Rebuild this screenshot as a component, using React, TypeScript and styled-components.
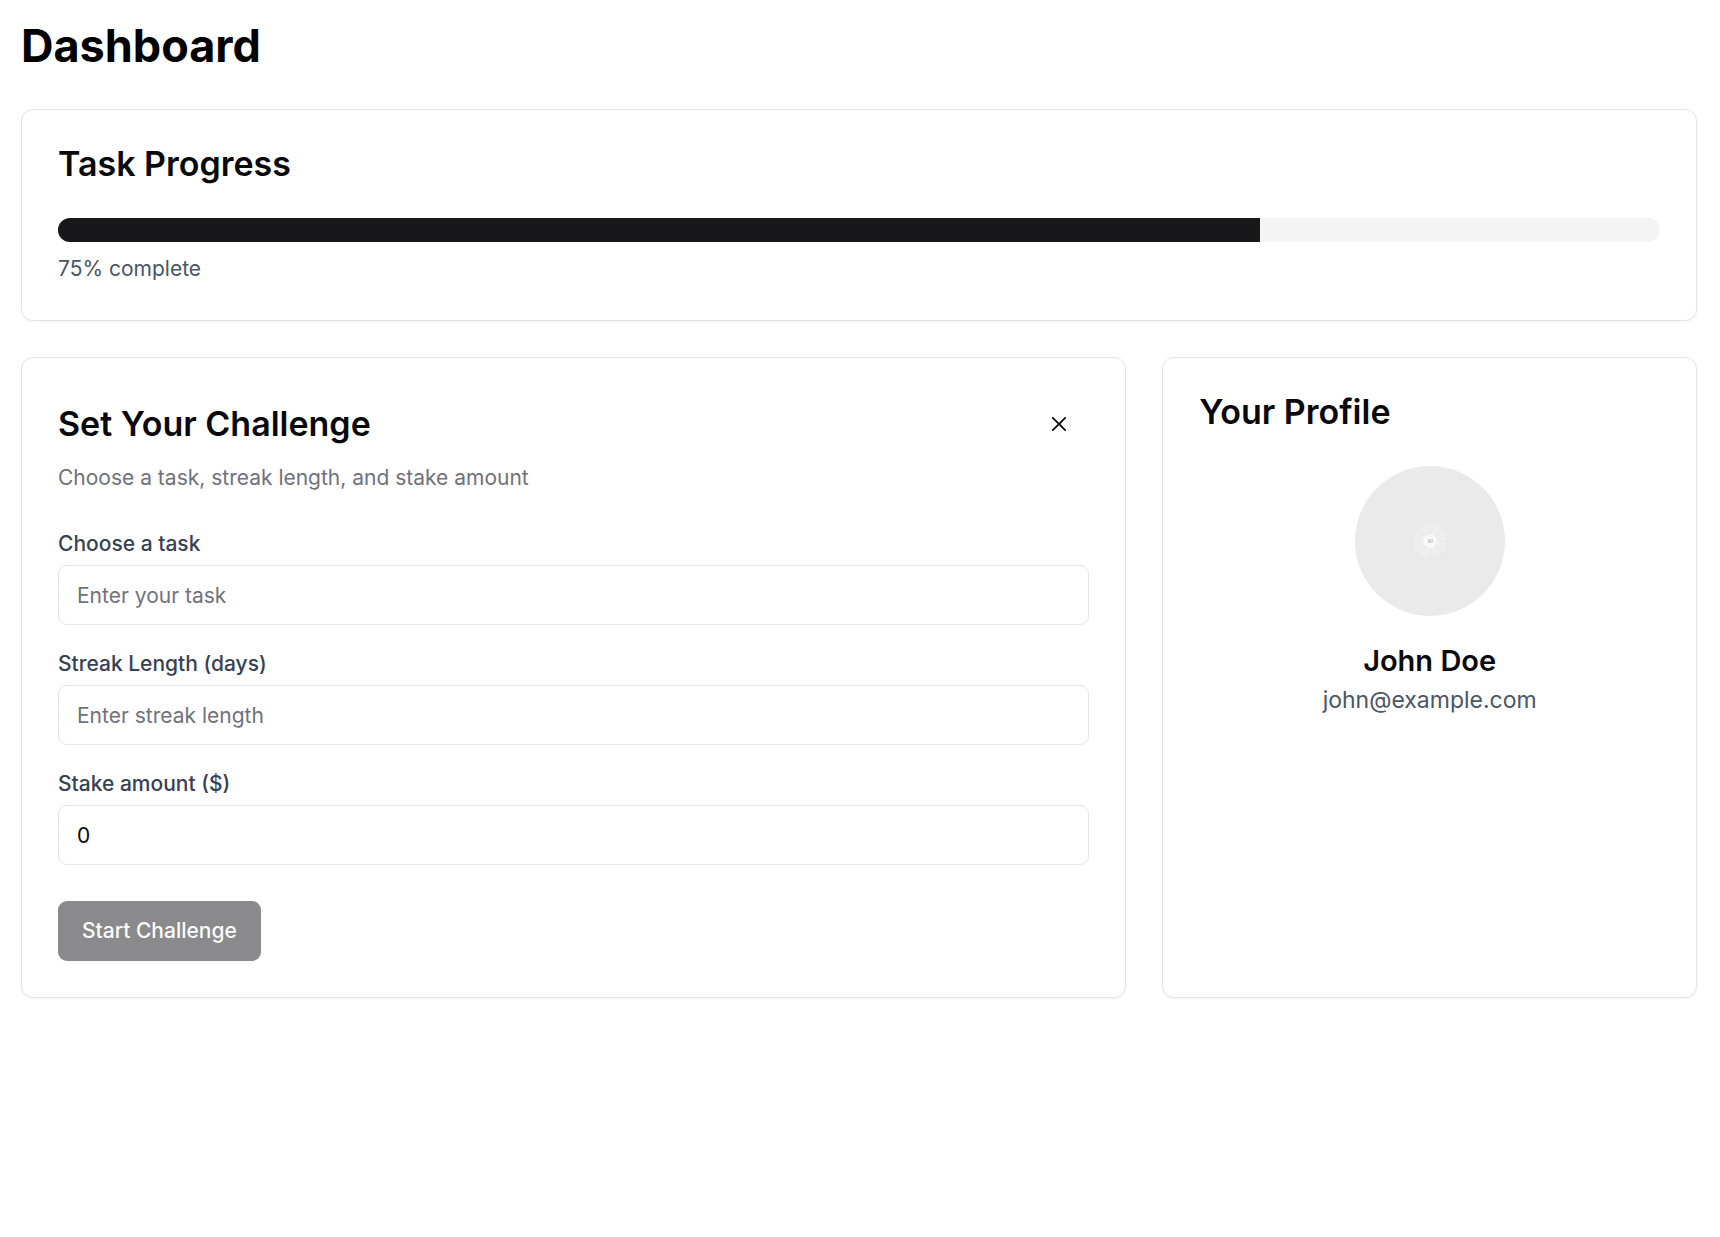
import React, { useState } from "react";
import styled, { createGlobalStyle } from "styled-components";

const GlobalStyle = createGlobalStyle`
  *, *::before, *::after { box-sizing: border-box; }
  body {
    margin: 0;
    background: #ffffff;
    color: #000000;
    font-family: Inter, "Liberation Sans", sans-serif;
    font-size: 24px;
    line-height: 36px;
    -webkit-font-smoothing: antialiased;
  }
  h1, h2, h3, p { margin: 0; }
  button, input { font: inherit; }
`;

const Page = styled.main`
  display: flex;
  flex-direction: column;
  gap: 36px;
  padding: 19px 23px 36px 21px;
`;

const PageTitle = styled.h1`
  font-size: 45px;
  font-weight: 700;
  line-height: 54px;
`;

const Card = styled.section`
  border: 1px solid #e4e4e7;
  border-radius: 12px;
  padding: 36px;
  background: #ffffff;
  color: #09090b;
  box-shadow: 0 1px 3px rgba(0, 0, 0, 0.05);
`;

const CardGrid = styled.div`
  display: grid;
  grid-template-columns: repeat(3, minmax(0, 1fr));
  gap: 36px;
`;

const ChallengeCard = styled(Card)`
  grid-column: span 2;
`;

const CardTitle = styled.h2`
  font-size: 34px;
  font-weight: 600;
  line-height: 36px;
`;

const ProgressTrack = styled.div`
  height: 24px;
  margin: 36px 0 12px;
  border-radius: 12px;
  overflow: hidden;
  background: #f4f4f5;
`;

const ProgressFill = styled.div`
  height: 100%;
  background: #18181b;
`;

const SmallText = styled.p<{ $color: string }>`
  font-size: 21px;
  line-height: 30px;
  color: ${({ $color }) => $color};
`;

const ChallengeHeader = styled.header`
  display: flex;
  align-items: center;
  justify-content: space-between;
  margin-bottom: 9px;
`;

const IconButton = styled.button`
  display: flex;
  align-items: center;
  justify-content: center;
  width: 60px;
  height: 60px;
  padding: 0;
  border: 0;
  border-radius: 9px;
  background: transparent;
  color: #09090b;
  cursor: pointer;
  &:hover { background: #f4f4f5; }
`;

const Form = styled.form`
  display: flex;
  flex-direction: column;
  align-items: flex-start;
  gap: 36px;
  margin-top: 36px;
`;

const Fields = styled.div`
  display: flex;
  flex-direction: column;
  gap: 24px;
  width: 100%;
`;

const Field = styled.div`
  display: flex;
  flex-direction: column;
  gap: 6px;
`;

const Label = styled.label`
  font-size: 21px;
  font-weight: 500;
  line-height: 30px;
  color: #374151;
`;

const Input = styled.input`
  width: 100%;
  height: 60px;
  padding: 12px 18px;
  border: 1px solid #e4e4e7;
  border-radius: 9px;
  background: #ffffff;
  color: #09090b;
  font-size: 21px;
  line-height: 30px;
  appearance: textfield;
  &::placeholder { color: #71717a; opacity: 1; }
  &::-webkit-inner-spin-button { display: none; }
`;

const SubmitButton = styled.button`
  height: 60px;
  padding: 0 24px;
  border: 0;
  border-radius: 9px;
  background: #18181b;
  color: #fafafa;
  font-size: 21px;
  font-weight: 500;
  line-height: 30px;
  cursor: pointer;
  &:disabled { opacity: 0.5; cursor: default; }
`;

const Profile = styled.div`
  display: flex;
  flex-direction: column;
  align-items: center;
  margin-top: 36px;
`;

const Avatar = styled.svg`
  width: 150px;
  height: 150px;
  margin-bottom: 24px;
  border-radius: 50%;
`;

const ProfileName = styled.h3`
  font-size: 29px;
  font-weight: 600;
  line-height: 42px;
`;

const ProfileEmail = styled.p`
  font-size: 23px;
  line-height: 36px;
  color: #4b5563;
`;

function CrossIcon() {
  return (
    <svg width="24" height="24" viewBox="0 0 15 15" aria-hidden="true">
      <path
        fill="currentColor"
        fillRule="evenodd"
        clipRule="evenodd"
        d="M11.7816 4.03157C12.0062 3.80702 12.0062 3.44295 11.7816 3.2184C11.5571 2.99385 11.193 2.99385 10.9685 3.2184L7.50005 6.68682L4.03164 3.2184C3.80708 2.99385 3.44301 2.99385 3.21846 3.2184C2.99391 3.44295 2.99391 3.80702 3.21846 4.03157L6.68688 7.49999L3.21846 10.9684C2.99391 11.193 2.99391 11.557 3.21846 11.7816C3.44301 12.0061 3.80708 12.0061 4.03164 11.7816L7.50005 8.31316L10.9685 11.7816C11.193 12.0061 11.5571 12.0061 11.7816 11.7816C12.0062 11.557 12.0062 11.193 11.7816 10.9684L8.31322 7.49999L11.7816 4.03157Z"
      />
    </svg>
  );
}

function ProfilePicture() {
  return (
    <Avatar viewBox="0 0 150 150" role="img" aria-label="Profile picture">
      <rect width="150" height="150" fill="#eaeaea" />
      <circle cx="75" cy="75" r="17" fill="#eeeeee" />
      <g stroke="#e7e7e7" strokeWidth="1">
        <path d="M54 75h42M75 54v42M53 53l44 44M97 53l-44 44" />
      </g>
      <circle cx="75" cy="75" r="7" fill="#f8f8f8" />
      <path fill="#cfcfcf" d="M73 73h5v4l-1-1-1 1h-3z" />
      <path fill="#dedede" d="M73 73h3v1h-3z" />
      <circle cx="76.5" cy="74.5" r="0.7" fill="#f8f8f8" />
    </Avatar>
  );
}

export default function App() {
  const progress = 75;
  const [task, setTask] = useState("");
  const [streak, setStreak] = useState("");
  const [stake, setStake] = useState("0");
  const ready = task !== "" && Number(streak) > 0 && Number(stake) > 0;

  return (
    <>
      <GlobalStyle />
      <Page>
        <PageTitle>Dashboard</PageTitle>

        <Card>
          <CardTitle>Task Progress</CardTitle>
          <ProgressTrack
            role="progressbar"
            aria-label="Task progress"
            aria-valuenow={progress}
            aria-valuemin={0}
            aria-valuemax={100}
          >
            <ProgressFill style={{ width: `${progress}%` }} />
          </ProgressTrack>
          <SmallText $color="#4b5563">{progress}% complete</SmallText>
        </Card>

        <CardGrid>
          <ChallengeCard>
            <ChallengeHeader>
              <CardTitle>Set Your Challenge</CardTitle>
              <IconButton type="button" aria-label="Close">
                <CrossIcon />
              </IconButton>
            </ChallengeHeader>
            <SmallText $color="#71717a">Choose a task, streak length, and stake amount</SmallText>
            <Form onSubmit={(event) => event.preventDefault()}>
              <Fields>
                <Field>
                  <Label htmlFor="task">Choose a task</Label>
                  <Input
                    id="task"
                    placeholder="Enter your task"
                    value={task}
                    onChange={(event) => setTask(event.target.value)}
                  />
                </Field>
                <Field>
                  <Label htmlFor="streak">Streak Length (days)</Label>
                  <Input
                    id="streak"
                    type="number"
                    placeholder="Enter streak length"
                    value={streak}
                    onChange={(event) => setStreak(event.target.value)}
                  />
                </Field>
                <Field>
                  <Label htmlFor="stake">Stake amount ($)</Label>
                  <Input
                    id="stake"
                    type="number"
                    value={stake}
                    onChange={(event) => setStake(event.target.value)}
                  />
                </Field>
              </Fields>
              <SubmitButton type="submit" disabled={!ready}>
                Start Challenge
              </SubmitButton>
            </Form>
          </ChallengeCard>

          <Card>
            <CardTitle>Your Profile</CardTitle>
            <Profile>
              <ProfilePicture />
              <ProfileName>John Doe</ProfileName>
              <ProfileEmail>john@example.com</ProfileEmail>
            </Profile>
          </Card>
        </CardGrid>
      </Page>
    </>
  );
}
